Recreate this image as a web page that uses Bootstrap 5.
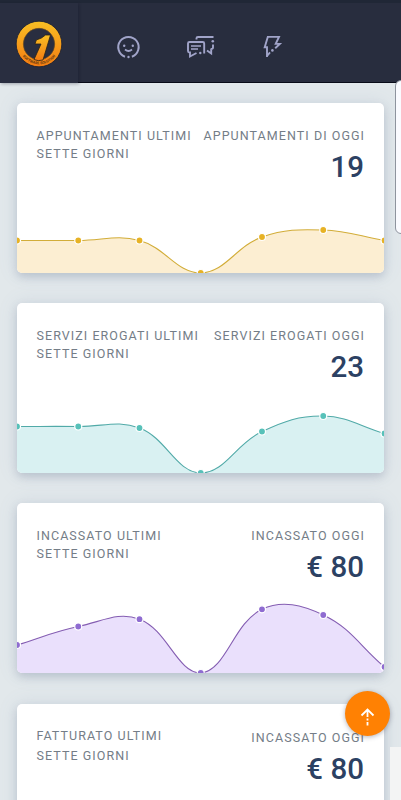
<!DOCTYPE html>
<html lang="it">
<head>
<meta charset="utf-8">
<meta name="viewport" content="width=device-width, initial-scale=1">
<title>Dashboard</title>
<link href="https://cdn.jsdelivr.net/npm/bootstrap@5.3.0/dist/css/bootstrap.min.css" rel="stylesheet">
<style>
html,body{height:100%;overflow:hidden}
body{font-family:Roboto,"Liberation Sans",sans-serif;background:#e2e8eb}
.topbar{height:83px;background:#282d3e;border-top:3px solid #202736;border-bottom:1px solid #080b18}
.brand-box{width:78px;height:80px;background:#292e40;box-shadow:1px 1px 3px rgba(10,14,34,.3)}
.brand-box svg{margin:17px 0 0 15px}
.nav-icon{color:#a1a4c9}
.cards{height:717px;overflow:hidden;padding:19.5px 17px 0 16.5px;gap:30px}
.stat{height:170.5px;border-radius:5px;box-shadow:0 4px 9px rgba(90,108,135,.25),0 0 20px rgba(100,120,170,.13);color:#747d87}
.stat + .stat{margin-top:-.5px}
.stat-head{padding:24.500px 20px 0}
.stat-label{font-size:12.5px;line-height:18px;letter-spacing:1.06px;white-space:nowrap}
.stat-label.wide{line-height:20px}
.stat-label span{margin-right:-1.06px}
.stat-value{font-size:29.500px;font-weight:500;line-height:36px;color:#2c4163;margin-top:4px}
.chart{left:0;bottom:0;width:367.5px;height:170px;border-radius:5px}
.stat.last{margin-top:1px}
.last .stat-head{padding-top:22px}
.last .text-end{padding-top:3px}
.side-panel{right:-10px;top:80px;width:16px;height:154px;border:1px solid #8e949e;border-radius:6px;background:#fafbff}
.corner{right:0;top:747px;width:11px;height:53px;background:#f3f4f4}
.up-btn{left:345px;top:690.500px;width:45px;height:45px;background:#ff8103;box-shadow:0 1px 5px rgba(60,60,80,.4)}
</style>
<script src="https://cdn.jsdelivr.net/npm/bootstrap@5.3.0/dist/js/bootstrap.bundle.min.js"></script>
</head>
<body>
<nav class="topbar d-flex position-relative">
  <div class="brand-box flex-shrink-0">
    <svg class="d-block" width="48" height="48" viewBox="0 0 48 48">
      <defs><linearGradient id="gold" x1="0" y1="0" x2="0" y2="1"><stop offset="0" stop-color="#f8bf24"/><stop offset="1" stop-color="#f47c12"/></linearGradient>
      <path id="arc" d="M4.800 31.300A20.700 20.700 0 0 0 43.200 31.300"/></defs>
      <circle cx="24" cy="24" r="22.800" fill="url(#gold)" stroke="#1b2030" stroke-width=".8"/>
      <circle cx="24" cy="24" r="15.700" fill="#292e40" stroke="#6c4b20" stroke-width=".6"/>
      <path d="M35.500 15H30.500Q27 18.500 21.300 20L20 24H26L19 39.500Q23 41.500 28 40Z" fill="url(#gold)" stroke="#292216" stroke-width=".8"/>
      <text font-family="Roboto, sans-serif" font-size="3.700" font-weight="700" fill="#5d3510"><textPath href="#arc" startOffset="50%" text-anchor="middle">SOFTWARE SOLUTION</textPath></text>
    </svg>
  </div>
  <svg class="nav-icon position-absolute" style="left:116px;top:32px" width="26" height="26" viewBox="0 0 26 26" fill="none" stroke="currentColor" stroke-width="2">
    <path d="M9 21.700A10.200 10.200 0 1 1 15.900 21.700"/><path d="M9 14.500q3.500 3 7 0" stroke-width="1.700"/>
    <g fill="currentColor" stroke="none"><circle cx="8.200" cy="10.700" r="1.200"/><circle cx="16.800" cy="10.700" r="1.200"/><circle cx="12.500" cy="22" r="1.200"/></g>
  </svg>
  <svg class="nav-icon position-absolute" style="left:186px;top:32px" width="30" height="26" viewBox="0 0 30 26" fill="none" stroke="currentColor" stroke-width="1.900">
    <path d="M10.500 4.500V3.200Q10.500 2 12 2H27.500M27 9.500V12.500Q27 14 25 14M21 15.500L25.200 18.500V13.500"/>
    <path d="M10.500 18L4 21.500V17.500H3.500Q2 17.500 2 16V8.500Q2 7 3.500 7H16.700Q18.200 7 18.200 8.500V18.500"/>
    <path d="M5 11H15M5 14H12" stroke-width="1.600"/>
    <g fill="currentColor" stroke="none"><circle cx="26.800" cy="6.200" r="1.300"/><circle cx="14.300" cy="18" r="1.200"/></g>
  </svg>
  <svg class="nav-icon position-absolute" style="left:262px;top:32px" width="22" height="26" viewBox="0 0 22 26" fill="none" stroke="currentColor" stroke-width="1.900">
    <path d="M5 22V12.300H2.700L5.800 1.900H17L13.700 8.900H17.800L13.200 13.300M5 21L8 17.300"/><circle cx="10.400" cy="15.400" r="1.300" fill="currentColor" stroke="none"/>
  </svg>
</nav>
<main class="cards d-flex flex-column">
  <section class="card border-0 stat flex-shrink-0">
    <div class="stat-head d-flex justify-content-between">
      <div class="stat-label">APPUNTAMENTI ULTIMI<br>SETTE GIORNI</div>
      <div class="text-end text-nowrap"><div class="stat-label"><span>APPUNTAMENTI DI OGGI</span></div><div class="stat-value">19</div></div>
    </div>
    <svg class="chart position-absolute" data-y="137.500,137.500,137.500,170,134,127,137.500" data-line="#d2ad39" data-dot="#e7b225" data-fill="#fceed2"></svg>
  </section>
  <section class="card border-0 stat flex-shrink-0">
    <div class="stat-head d-flex justify-content-between">
      <div class="stat-label">SERVIZI EROGATI ULTIMI<br>SETTE GIORNI</div>
      <div class="text-end text-nowrap"><div class="stat-label"><span>SERVIZI EROGATI OGGI</span></div><div class="stat-value">23</div></div>
    </div>
    <svg class="chart position-absolute" data-y="123.500,123.500,125,170,128.500,113,130.500" data-line="#51aaa8" data-dot="#57c1b9" data-fill="#d9f1f2"></svg>
  </section>
  <section class="card border-0 stat flex-shrink-0">
    <div class="stat-head d-flex justify-content-between">
      <div class="stat-label">INCASSATO ULTIMI<br>SETTE GIORNI</div>
      <div class="text-end text-nowrap"><div class="stat-label"><span>INCASSATO OGGI</span></div><div class="stat-value">€ 80</div></div>
    </div>
    <svg class="chart position-absolute" data-y="142,123.500,116.200,170,106.300,112,164" data-line="#845db2" data-dot="#8f6cd1" data-fill="#eae0fc"></svg>
  </section>
  <section class="card border-0 stat last flex-shrink-0">
    <div class="stat-head d-flex justify-content-between">
      <div class="stat-label wide">FATTURATO ULTIMI<br>SETTE GIORNI</div>
      <div class="text-end text-nowrap"><div class="stat-label"><span>INCASSATO OGGI</span></div><div class="stat-value">€ 80</div></div>
    </div>
  </section>
</main>
<div class="side-panel position-absolute"></div>
<div class="corner position-absolute"></div>
<button class="up-btn btn p-0 border-0 rounded-circle position-absolute" aria-label="Torna su">
  <svg class="d-block" width="45" height="45" viewBox="0 0 45 45" fill="none" stroke="#fff" stroke-width="1.800"><path d="M16.500 24.500L22.500 18.500L28.500 24.500M22.500 19V26"/><path d="M22.500 27.500V29.500M22.500 31V34.500"/></svg>
</button>
<script>
// Smooth area charts: spline tension 0.4, control points kept inside the plot.
document.querySelectorAll('.chart').forEach(function (svg) {
  var p = svg.dataset.y.split(',').map(function (y, i) { return [i * 367.5 / 6, +y]; });
  var cap = function (y) { return Math.max(0, Math.min(170, y)); };
  var c = p.map(function (q, i) {
    var a = p[i - 1] || q, b = p[i + 1] || q;
    var d1 = Math.hypot(q[0] - a[0], q[1] - a[1]), d2 = Math.hypot(b[0] - q[0], b[1] - q[1]);
    var f1 = 0.4 * d1 / (d1 + d2), f2 = 0.4 * d2 / (d1 + d2);
    return [[q[0] - f1 * (b[0] - a[0]), cap(q[1] - f1 * (b[1] - a[1]))], [q[0] + f2 * (b[0] - a[0]), cap(q[1] + f2 * (b[1] - a[1]))]];
  });
  var d = 'M' + p[0];
  for (var i = 1; i < p.length; i++) d += 'C' + c[i - 1][1] + ' ' + c[i][0] + ' ' + p[i];
  var s = svg.dataset;
  svg.innerHTML = '<path d="' + d + 'V170H0Z" fill="' + s.fill + '"/><path d="' + d + '" fill="none" stroke="' + s.line + '" stroke-width="1.1"/>' +
    p.map(function (q) { return '<circle cx="' + q[0] + '" cy="' + q[1] + '" r="3.500" fill="' + s.dot + '" stroke="#fff" stroke-width="1.200"/>'; }).join('');
});
</script>
</body>
</html>
